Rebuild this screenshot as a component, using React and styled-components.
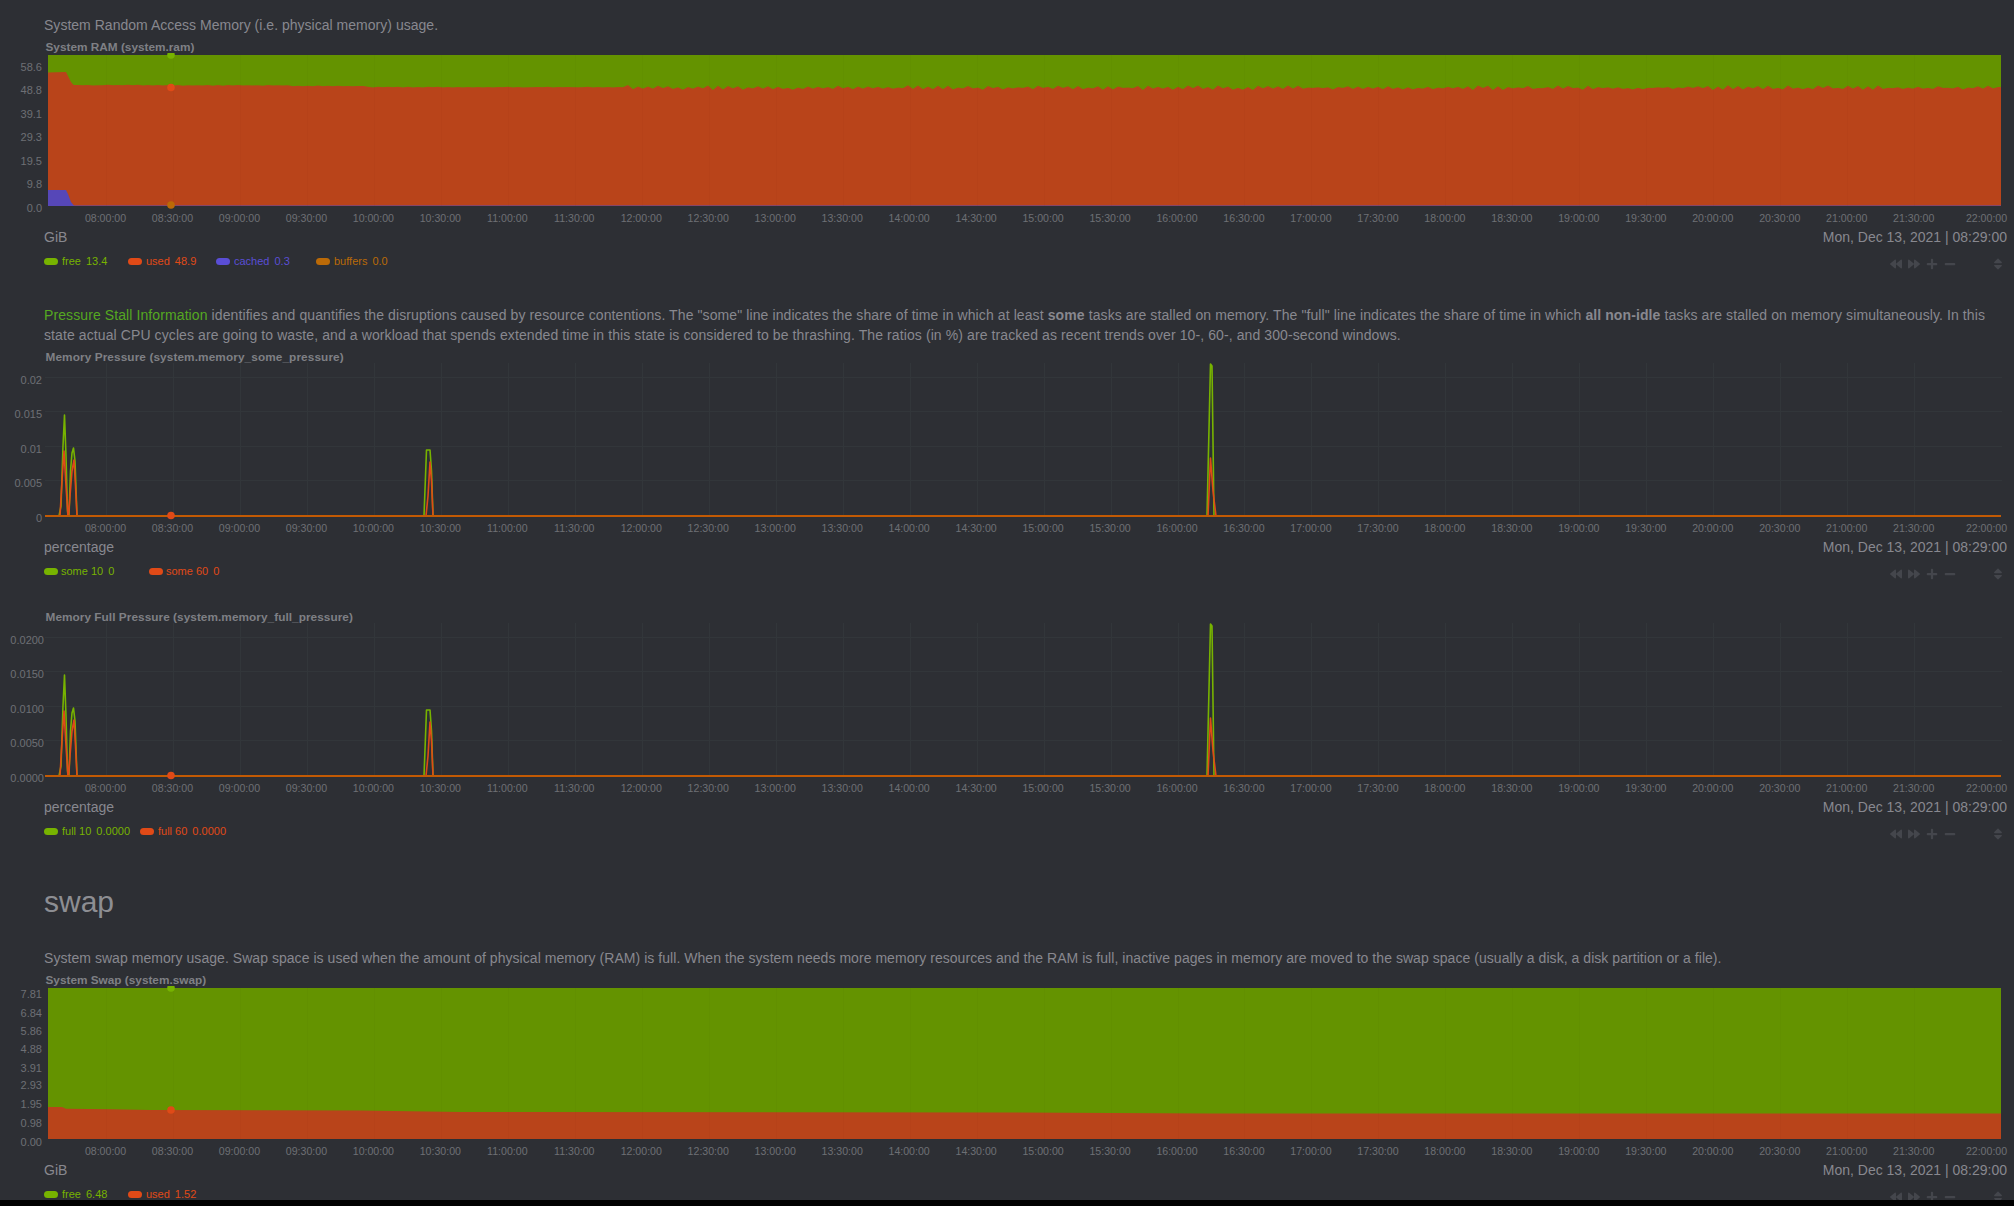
import React from "react";
import styled, { createGlobalStyle } from "styled-components";
import { FaBackward, FaForward, FaPlus, FaMinus, FaSort } from "react-icons/fa";

const GlobalStyle = createGlobalStyle`
  html, body {
    margin: 0;
    padding: 0;
    background: #000;
  }
`;

const GREEN = "#77b300";
const RED = "#e04a17";
const PURPLE = "#5a4ed6";
const AMBER = "#bb6a07";
const FILL_GREEN = "#649300";
const FILL_RED = "#b9441a";
const FILL_PURPLE = "#5647b8";
const LINE_MIX = "#c25a04";

const PLOT_LEFT = 48;
const PLOT_RIGHT = 2001;

const TIMES = [
  "08:00:00", "08:30:00", "09:00:00", "09:30:00", "10:00:00", "10:30:00", "11:00:00", "11:30:00",
  "12:00:00", "12:30:00", "13:00:00", "13:30:00", "14:00:00", "14:30:00", "15:00:00", "15:30:00",
  "16:00:00", "16:30:00", "17:00:00", "17:30:00", "18:00:00", "18:30:00", "19:00:00", "19:30:00",
  "20:00:00", "20:30:00", "21:00:00", "21:30:00", "22:00:00",
];

const timeX = (i) => (i === 28 ? 1986.5 : 105.5 + i * 66.97);

// small repeatable noise so the edge looks the same on every load
const noise = (x) => {
  const v = Math.sin(x * 12.9898) * 43758.5453;
  return v - Math.floor(v);
};

const ramEdge = () => {
  const pts = [[48, 72.5], [66, 72], [68, 76], [71, 82], [73, 84.5], [74, 85]];
  let odd = false;
  for (let x = 78; x < PLOT_RIGHT; x += 5) {
    let base = 85.2;
    if (x > 170) base = 85.4;
    if (x > 290) base = 86;
    if (x > 365) base = 87.2;
    if (x > 640) base = 87.9;
    const amp = x < 620 ? 0.5 : 2.6;
    const n = noise(x);
    odd = !odd;
    pts.push([x, base + (odd ? -n : n * 0.8) * amp]);
  }
  pts.push([PLOT_RIGHT, 87]);
  return pts;
};

const swapEdge = () => [
  [48, 1107], [62, 1107], [66, 1108.7], [110, 1109.2], [150, 1110], [360, 1110.5], [460, 1112],
  [1000, 1112.4], [1110, 1112.9], [1210, 1113.6], [PLOT_RIGHT, 1113.6],
];

const toPath = (pts) => pts.map((p, i) => `${i ? "L" : "M"}${p[0]} ${p[1]}`).join(" ");

const spikesFor = (peaks, base) => {
  const pts = [[PLOT_LEFT - 3, base]];
  peaks.forEach((p) => p.forEach(([x, y]) => pts.push([x, y])));
  pts.push([PLOT_RIGHT, base]);
  return toPath(pts);
};

const pressureGreen = (base) => {
  const b = base;
  return spikesFor(
    [
      [[59, b], [61, b - 10], [63, b - 70], [64.5, b - 101], [66, b - 60], [67.5, b - 5], [68, b]],
      [[69, b], [70.5, b - 45], [72, b - 63], [73.5, b - 68], [75, b - 55], [77, b]],
      [[424, b], [426.5, b - 66], [430, b - 66], [431.5, b - 45], [433, b]],
      [[1207, b], [1210.5, b - 152], [1212, b - 150], [1214, b]],
    ],
    b
  );
};

const pressureRed = (base) => {
  const b = base;
  return spikesFor(
    [
      [[60, b], [62, b - 35], [64, b - 65], [66, b - 30], [68, b]],
      [[68.5, b], [70, b - 20], [72, b - 45], [74, b - 56], [75.5, b - 30], [77, b]],
      [[426, b], [428, b - 20], [430, b - 54], [431.5, b - 35], [433, b]],
      [[1208, b], [1210.5, b - 58], [1213, b - 25], [1216, b]],
    ],
    b
  );
};

const Page = styled.div`
  height: 1200px;
  overflow: hidden;
  background: #2d2f34;
  padding: 15px 7px 0 44px;
  box-sizing: border-box;
  font-family: "Liberation Sans", Arial, sans-serif;
  color: #88888f;
`;

const Description = styled.div`
  font-size: 14px;
  line-height: 20px;
  white-space: nowrap;
  letter-spacing: ${(p) => p.$spacing || 0.02}px;
  margin-top: ${(p) => p.$top || 0}px;
  margin-bottom: 6px;
  b {
    font-weight: 700;
  }
  a {
    color: #55a821;
    text-decoration: none;
  }
`;

const SectionTitle = styled.h2`
  margin: 45px 0 30px;
  font-size: 30px;
  line-height: 33px;
  font-weight: 400;
  color: #8d8e93;
`;

const Block = styled.section`
  position: relative;
`;

const ChartTitle = styled.div`
  font-size: 11.8px;
  line-height: 12px;
  height: 12px;
  font-weight: 700;
  color: #7f8085;
  margin-left: 1.5px;
  letter-spacing: ${(p) => p.$spacing || 0}px;
`;

const ChartSvg = styled.svg`
  display: block;
  width: 2014px;
  height: 174px;
  margin-left: -44px;
  text {
    font-family: "Liberation Sans", Arial, sans-serif;
    fill: #6e6f74;
  }
`;

const Footer = styled.div`
  display: flex;
  justify-content: space-between;
  align-items: center;
  height: 20px;
  font-size: 14px;
  line-height: 20px;
`;

const LegendRow = styled.div`
  display: flex;
  align-items: center;
  justify-content: space-between;
  height: 18px;
  margin-top: 5px;
`;

const Legend = styled.div`
  display: flex;
  align-items: center;
`;

const LegendItem = styled.div`
  display: flex;
  align-items: center;
  width: ${(p) => p.$width}px;
  font-size: 11px;
  color: ${(p) => p.$color};
`;

const Pill = styled.span`
  width: 14px;
  height: 7px;
  border-radius: 4px;
  margin-right: ${(p) => p.$gap || 4}px;
  background: ${(p) => p.$color};
`;

const LegendValue = styled.span`
  margin-left: 5px;
`;

const Toolbar = styled.div`
  display: flex;
  align-items: center;
  color: #44464c;
  font-size: 12px;
  height: 18px;
  margin-top: 6px;
  svg {
    display: block;
  }
`;

const ToolButton = styled.span`
  display: flex;
  justify-content: center;
  width: 18px;
  font-size: ${(p) => p.$size || 12}px;
  margin-left: ${(p) => p.$gap || 0}px;
`;

const Spacer = styled.div`
  height: ${(p) => p.$height}px;
`;

const Grid = ({ top, rows, base }) => (
  <g stroke="#32363a" strokeWidth="1">
    {TIMES.slice(0, 28).map((_, i) => {
      const x = Math.round(106 + i * 66.97) + 0.5;
      return <line key={i} x1={x} x2={x} y1={top} y2={base} />;
    })}
    {rows.map((y) => (
      <line key={y} x1={45} x2={2002} y1={y} y2={y} />
    ))}
  </g>
);

const YLabels = ({ items, right = 42 }) => (
  <g fontSize="11" textAnchor="end">
    {items.map(([label, y]) => (
      <text key={label} x={right} y={y + 4}>
        {label}
      </text>
    ))}
  </g>
);

const XLabels = () => (
  <g fontSize="10.6" textAnchor="middle">
    {TIMES.map((t, i) => (
      <text key={t} x={timeX(i)} y={168.5}>
        {t}
      </text>
    ))}
  </g>
);

const FaintLines = ({ top, base }) => (
  <g stroke="#000" strokeOpacity="0.015">
    {TIMES.slice(0, 28).map((_, i) => {
      const x = Math.round(106 + i * 66.97) + 0.5;
      return <line key={i} x1={x} x2={x} y1={top} y2={base} />;
    })}
  </g>
);

// svg is placed at y = offset in page coords, so plot coords are shifted
const RamChart = () => {
  const off = 53;
  const top = 2;
  const base = 153;
  const edge = ramEdge().map(([x, y]) => [x, y - off]);
  const purple = [[48, 190 - off], [66, 190 - off], [68, 194 - off], [71, 202 - off], [74, 205.4 - off], [PLOT_RIGHT, 205.6 - off]];
  const close = `L${PLOT_RIGHT} ${base} L48 ${base} Z`;
  return (
    <ChartSvg viewBox="0 0 2014 174">
      <rect x={PLOT_LEFT} y={top} width={PLOT_RIGHT - PLOT_LEFT} height={base - top} fill={FILL_GREEN} />
      <path d={`${toPath(edge)} ${close}`} fill={FILL_RED} />
      <path d={`${toPath(purple)} ${close}`} fill={FILL_PURPLE} />
      <FaintLines top={top} base={base} />
      <circle cx="171" cy={top} r="3.8" fill={GREEN} />
      <circle cx="171" cy={87.5 - off} r="3.8" fill={RED} />
      <circle cx="171" cy={205 - off} r="3.8" fill={AMBER} />
      <YLabels
        items={[
          ["58.6", 14],
          ["48.8", 37],
          ["39.1", 61],
          ["29.3", 84],
          ["19.5", 108],
          ["9.8", 131],
          ["0.0", 155],
        ]}
      />
      <XLabels />
    </ChartSvg>
  );
};

const PressureChart = ({ labels }) => {
  const rows = [14.5, 48.5, 83.5, 117.5];
  const base = 153;
  return (
    <ChartSvg viewBox="0 0 2014 174">
      <Grid top={0} rows={rows} base={base} />
      <path d={pressureGreen(base)} fill="none" stroke={GREEN} strokeWidth="1.6" strokeLinejoin="round" />
      <path d={pressureRed(base)} fill="none" stroke={RED} strokeWidth="1.6" strokeLinejoin="round" />
      <line x1={45} x2={PLOT_RIGHT} y1={base} y2={base} stroke={LINE_MIX} strokeWidth="2" />
      <circle cx="171" cy={base - 0.5} r="3.8" fill={RED} />
      <YLabels items={labels} right={labels[0][0].length > 4 ? 44 : 42} />
      <XLabels />
    </ChartSvg>
  );
};

const SwapChart = () => {
  const off = 986;
  const top = 2;
  const base = 153;
  const edge = swapEdge().map(([x, y]) => [x, y - off]);
  return (
    <ChartSvg viewBox="0 0 2014 174">
      <rect x={PLOT_LEFT} y={top} width={PLOT_RIGHT - PLOT_LEFT} height={base - top} fill={FILL_GREEN} />
      <path d={`${toPath(edge)} L${PLOT_RIGHT} ${base} L48 ${base} Z`} fill={FILL_RED} />
      <FaintLines top={top} base={base} />
      <circle cx="171" cy={top} r="3.8" fill={GREEN} />
      <circle cx="171" cy={1110 - off} r="3.8" fill={RED} />
      <YLabels
        items={[
          ["7.81", 7.5],
          ["6.84", 26.5],
          ["5.86", 44.5],
          ["4.88", 62.5],
          ["3.91", 81.5],
          ["2.93", 99],
          ["1.95", 118],
          ["0.98", 136.5],
          ["0.00", 155.5],
        ]}
      />
      <XLabels />
    </ChartSvg>
  );
};

const Tools = () => (
  <Toolbar>
    <ToolButton>
      <FaBackward />
    </ToolButton>
    <ToolButton>
      <FaForward />
    </ToolButton>
    <ToolButton>
      <FaPlus />
    </ToolButton>
    <ToolButton>
      <FaMinus />
    </ToolButton>
    <ToolButton $gap={30} $size={14}>
      <FaSort />
    </ToolButton>
  </Toolbar>
);

const ChartBlock = ({ title, unit, legend, gap, titleSpacing, children }) => (
  <Block>
    <ChartTitle $spacing={titleSpacing}>{title}</ChartTitle>
    {children}
    <Footer>
      <span>{unit}</span>
      <span>Mon, Dec 13, 2021 | 08:29:00</span>
    </Footer>
    <LegendRow>
      <Legend>
        {legend.map((item) => (
          <LegendItem key={item.label} $width={item.width} $color={item.color}>
            <Pill $color={item.color} $gap={gap} />
            <span>{item.label}</span>
            <LegendValue>{item.value}</LegendValue>
          </LegendItem>
        ))}
      </Legend>
      <Tools />
    </LegendRow>
  </Block>
);

export default function App() {
  return (
    <>
      <GlobalStyle />
      <Page>
        <Description>System Random Access Memory (i.e. physical memory) usage.</Description>
        <ChartBlock
          title="System RAM (system.ram)"
          unit="GiB"
          legend={[
            { label: "free", value: "13.4", color: GREEN, width: 84 },
            { label: "used", value: "48.9", color: RED, width: 88 },
            { label: "cached", value: "0.3", color: PURPLE, width: 100 },
            { label: "buffers", value: "0.0", color: AMBER, width: 100 },
          ]}
        >
          <RamChart />
        </ChartBlock>

        <Description $top={35} $spacing={0.097}>
          <a href="#psi">Pressure Stall Information</a> identifies and quantifies the disruptions caused by resource
          contentions. The "some" line indicates the share of time in which at least <b>some</b> tasks are stalled on
          memory. The "full" line indicates the share of time in which <b>all non-idle</b> tasks are stalled on memory
          simultaneously. In this
          <br />
          state actual CPU cycles are going to waste, and a workload that spends extended time in this state is
          considered to be thrashing. The ratios (in %) are tracked as recent trends over 10-, 60-, and 300-second
          windows.
        </Description>
        <ChartBlock
          title="Memory Pressure (system.memory_some_pressure)"
          unit="percentage"
          gap={3}
          titleSpacing={0.1}
          legend={[
            { label: "some 10", value: "0", color: GREEN, width: 105 },
            { label: "some 60", value: "0", color: RED, width: 105 },
          ]}
        >
          <PressureChart
            labels={[
              ["0.02", 17],
              ["0.015", 51],
              ["0.01", 86],
              ["0.005", 120],
              ["0", 155],
            ]}
          />
        </ChartBlock>
        <Spacer $height={31} />
        <ChartBlock
          title="Memory Full Pressure (system.memory_full_pressure)"
          unit="percentage"
          titleSpacing={0.05}
          legend={[
            { label: "full 10", value: "0.0000", color: GREEN, width: 96 },
            { label: "full 60", value: "0.0000", color: RED, width: 96 },
          ]}
        >
          <PressureChart
            labels={[
              ["0.0200", 17],
              ["0.0150", 51],
              ["0.0100", 86],
              ["0.0050", 120],
              ["0.0000", 155],
            ]}
          />
        </ChartBlock>

        <SectionTitle>swap</SectionTitle>
        <Description $spacing={0.048}>
          System swap memory usage. Swap space is used when the amount of physical memory (RAM) is full. When the system
          needs more memory resources and the RAM is full, inactive pages in memory are moved to the swap space (usually a
          disk, a disk partition or a file).
        </Description>
        <ChartBlock
          title="System Swap (system.swap)"
          unit="GiB"
          legend={[
            { label: "free", value: "6.48", color: GREEN, width: 84 },
            { label: "used", value: "1.52", color: RED, width: 88 },
          ]}
        >
          <SwapChart />
        </ChartBlock>
      </Page>
    </>
  );
}
